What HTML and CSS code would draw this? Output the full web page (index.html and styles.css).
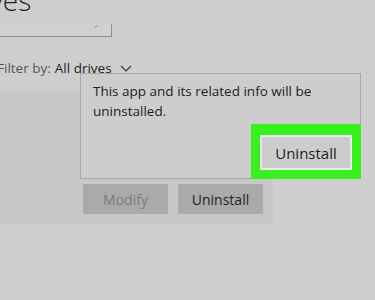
FILE: index.html
```html
<!DOCTYPE html>
<html lang="en">
<head>
    <meta charset="UTF-8">
    <meta name="viewport" content="width=device-width, initial-scale=1.0">
    <title>Apps &amp; features</title>
    <link rel="stylesheet" href="styles.css">
</head>
<body>
    <main class="settings">
        <h1 class="title">Drives</h1>

        <div class="search">
            <span class="search-glyph"></span>
        </div>

        <div class="filter">
            <span class="filter-label">Filter by:</span>
            <span class="filter-value">All drives</span>
            <svg class="chevron" width="12" height="7" viewBox="0 0 12 7">
                <path d="M1 1 L6 6 L11 1" fill="none" stroke="#333" stroke-width="1.2"/>
            </svg>
        </div>

        <section class="app-item">
            <div class="app-actions">
                <button class="btn btn-disabled" disabled>Modify</button>
                <button class="btn">Uninstall</button>
            </div>
        </section>

        <div class="flyout">
            <p class="flyout-text">This app and its related info will be uninstalled.</p>
            <div class="flyout-actions">
                <div class="highlight">
                    <button class="btn-confirm">Uninstall</button>
                </div>
            </div>
        </div>
    </main>
</body>
</html>
```

FILE: styles.css
```css
:root {
    --bg-color: #cecece;
    --item-color: #c8c8c8;
    --text-color: #1e1e1e;
    --muted-color: #555;
    --border-color: #a9a9a9;
    --highlight-color: #38f01f;
}

body {
    margin: 0;
    padding: 0;
    width: 375px;
    height: 300px;
    overflow: hidden;
    background-color: var(--bg-color);
    font-family: 'Open Sans', 'Noto Sans', sans-serif;
    color: var(--text-color);
}

.settings {
    position: relative;
    display: flow-root;
    height: 300px;
}

.title {
    margin: -14px 0 0 -47px;
    font-size: 28px;
    font-weight: 300;
    line-height: 28px;
    color: #222;
}

.search {
    position: relative;
    margin: 10px 0 0 -10px;
    width: 121px;
    height: 12px;
    border-right: 1px solid #8e8e8e;
    border-bottom: 1px solid #8e8e8e;
    background-color: #d1d1d1;
}

.search-glyph {
    position: absolute;
    left: 104px;
    top: 2px;
    width: 4px;
    height: 1px;
    background-color: #999;
    transform: rotate(-40deg);
}

.filter {
    display: flex;
    align-items: center;
    gap: 4px;
    margin: 22px 0 0 -3px;
    font-size: 13.5px;
    line-height: 18px;
}

.filter-label {
    color: var(--muted-color);
}

.chevron {
    margin-left: 4px;
}

.app-item {
    margin-top: 14px;
    width: 273px;
    height: 133px;
    background-color: var(--item-color);
    display: flex;
    align-items: flex-end;
}

.app-actions {
    display: flex;
    gap: 10px;
    margin: 0 0 10px 83px;
}

.btn {
    width: 85px;
    height: 30px;
    border: none;
    background-color: #aaaaaa;
    font-family: inherit;
    font-size: 14px;
    color: var(--text-color);
    padding: 0;
}

.btn-disabled {
    color: #7a7a7a;
}

.flyout {
    position: absolute;
    left: 80px;
    top: 73px;
    width: 279px;
    height: 104px;
    border: 1px solid var(--border-color);
    background-color: #cdcdcd;
    display: flex;
    flex-direction: column;
}

.flyout-text {
    margin: 7px 20px 0 12px;
    font-size: 13.5px;
    line-height: 20px;
}

.flyout-actions {
    margin-top: auto;
    display: flex;
    justify-content: flex-end;
}

.highlight {
    margin: 0 -1px -1px 0;
    padding: 11px 9px 9px;
    background-color: var(--highlight-color);
}

.btn-confirm {
    display: block;
    width: 92px;
    height: 35px;
    border: 2px solid #ececec;
    background-color: #cccccc;
    font-family: inherit;
    font-size: 15px;
    color: var(--text-color);
    padding: 0;
}
```
